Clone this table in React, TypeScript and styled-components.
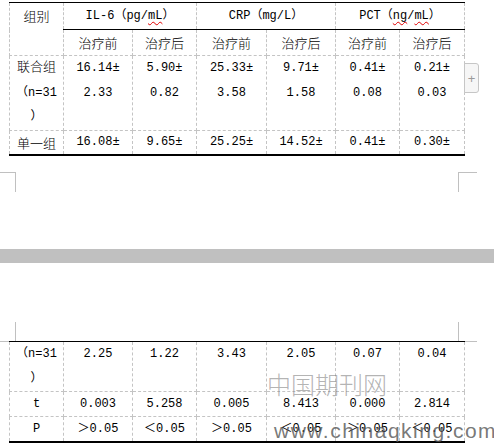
import React from "react";
import styled, { createGlobalStyle } from "styled-components";

const GlobalStyle = createGlobalStyle`
  html, body { margin: 0; padding: 0; background: #fff; }
  body {
    width: 494px;
    height: 446px;
    overflow: hidden;
    color: #000;
    font-family: "Liberation Mono", "Noto Sans CJK SC", monospace;
  }
`;

const LINE = "#c4c4c4";
const MARK = "#c0c0c0";

const Page = styled.div`
  position: relative;
  display: flex;
  flex-direction: column;
  align-items: flex-start;
  padding-top: 2px;
  width: 494px;
  height: 446px;
  box-sizing: border-box;
  overflow: hidden;
`;

const TableWrap = styled.div<{ $pull?: boolean }>`
  position: relative;
  margin-left: 9px;
  margin-top: ${(p) => (p.$pull ? "-1px" : "0")};
`;

const Grid = styled.table`
  border-collapse: collapse;
  table-layout: fixed;
  width: 455px;
  border-top: 1px solid #000;
  border-bottom: 2px solid #000;
  border-left: 1px dashed ${LINE};
  border-right: 1px dashed ${LINE};
`;

const Cell = styled.td<{ $cjk?: boolean; $top?: boolean; $rule?: boolean; $lh?: number }>`
  padding: 0;
  border: 1px dashed ${LINE};
  ${(p) => (p.$rule ? "border-bottom: 1px solid #000;" : "")}
  text-align: center;
  vertical-align: ${(p) => (p.$top ? "top" : "middle")};
  line-height: ${(p) => p.$lh ?? 24}px;
  white-space: nowrap;
  font-size: ${(p) => (p.$cjk ? "13px" : "12px")};
  font-weight: ${(p) => (p.$cjk ? 300 : 400)};
  font-family: ${(p) =>
    p.$cjk
      ? '"Noto Sans CJK SC", sans-serif'
      : '"Liberation Mono", "Noto Sans CJK SC", monospace'};
`;

const Cjk = styled.span`
  font-family: "Noto Sans CJK SC", sans-serif;
  font-size: 13px;
  font-weight: 300;
  line-height: 1;
`;

const Squiggle = styled.span`
  text-decoration: underline wavy #e00000;
  text-decoration-thickness: 1px;
  text-underline-offset: 2px;
`;

const PlusTab = styled.div`
  position: absolute;
  left: 455px;
  top: 61px;
  width: 13px;
  height: 28px;
  border: 1px solid #c6c6c6;
  border-radius: 0 3px 3px 0;
  background: #f6f6f6;
  color: #9a9a9a;
  display: flex;
  align-items: center;
  justify-content: center;
  font-family: "Liberation Sans", sans-serif;
  font-size: 13px;
`;

const MarkRow = styled.div<{ $gap: number }>`
  display: flex;
  justify-content: space-between;
  width: 477px;
  margin-top: ${(p) => p.$gap}px;
`;

const Mark = styled.div<{ $side: "left" | "right"; $edge: "top" | "bottom" }>`
  width: ${(p) => (p.$side === "left" ? 15 : 18)}px;
  height: 19px;
  border-${(p) => p.$edge}: 1px solid ${MARK};
  border-${(p) => (p.$side === "left" ? "right" : "left")}: 1px solid ${MARK};
`;

const Band = styled.div`
  align-self: stretch;
  height: 14px;
  margin-top: 57px;
  background: #c0c0c0;
`;

const WatermarkCn = styled.div`
  position: absolute;
  left: 267px;
  top: 372px;
  font-family: "Noto Sans CJK SC", sans-serif;
  font-weight: 300;
  font-size: 24px;
  line-height: 1;
  color: rgba(115, 115, 115, 0.55);
  white-space: nowrap;
`;

const WatermarkUrl = styled.div`
  position: absolute;
  left: 274px;
  top: 420px;
  font-family: "Liberation Sans", sans-serif;
  font-size: 21px;
  letter-spacing: 1.5px;
  line-height: 1;
  color: rgba(85, 85, 85, 0.8);
  white-space: nowrap;
`;

const COLS = [54, 69, 64, 70, 69, 64, 65];

const Cols = () => (
  <colgroup>
    {COLS.map((w, i) => (
      <col key={i} style={{ width: w }} />
    ))}
  </colgroup>
);

type Pair = [string, string];
const combined: Pair[] = [
  ["16.14±", "2.33"],
  ["5.90±", "0.82"],
  ["25.33±", "3.58"],
  ["9.71±", "1.58"],
  ["0.41±", "0.08"],
  ["0.21±", "0.03"],
];
const single = ["16.08±", "9.65±", "25.25±", "14.52±", "0.41±", "0.30±"];
const singleSd = ["2.25", "1.22", "3.43", "2.05", "0.07", "0.04"];
const tVals = ["0.003", "5.258", "0.005", "8.413", "0.000", "2.814"];
const pVals = ["＞0.05", "＜0.05", "＞0.05", "＜0.05", "＞0.05", "＜0.05"];
const phases = ["治疗前", "治疗后", "治疗前", "治疗后", "治疗前", "治疗后"];

const TRIPLE = 74 / 3;

export default function App() {
  return (
    <>
      <GlobalStyle />
      <Page>
        <TableWrap>
          <Grid>
            <Cols />
            <tbody>
              <tr>
                <Cell $cjk $top $lh={26} rowSpan={2}>
                  组别
                </Cell>
                <Cell colSpan={2} $rule $lh={26}>
                  IL-6（pg/<Squiggle>mL</Squiggle>）
                </Cell>
                <Cell colSpan={2} $rule $lh={26}>
                  CRP（mg/L）
                </Cell>
                <Cell colSpan={2} $rule $lh={26}>
                  PCT（<Squiggle>ng</Squiggle>/<Squiggle>mL</Squiggle>）
                </Cell>
              </tr>
              <tr>
                {phases.map((p, i) => (
                  <Cell key={i} $cjk $lh={25}>
                    {p}
                  </Cell>
                ))}
              </tr>
              <tr>
                <Cell $lh={TRIPLE}>
                  <Cjk>联合组</Cjk>
                  <br />
                  （n=31
                  <br />）
                </Cell>
                {combined.map(([a, b], i) => (
                  <Cell key={i} $top $lh={TRIPLE}>
                    {a}
                    <br />
                    {b}
                  </Cell>
                ))}
              </tr>
              <tr>
                <Cell $cjk $lh={23}>
                  单一组
                </Cell>
                {single.map((v, i) => (
                  <Cell key={i} $lh={23}>
                    {v}
                  </Cell>
                ))}
              </tr>
            </tbody>
          </Grid>
          <PlusTab>+</PlusTab>
        </TableWrap>

        <MarkRow $gap={16}>
          <Mark $side="left" $edge="top" />
          <Mark $side="right" $edge="top" />
        </MarkRow>

        <Band />

        <MarkRow $gap={59}>
          <Mark $side="left" $edge="bottom" />
          <Mark $side="right" $edge="bottom" />
        </MarkRow>

        <TableWrap $pull>
          <Grid>
            <Cols />
            <tbody>
              <tr>
                <Cell $lh={24.5}>
                  （n=31
                  <br />）
                </Cell>
                {singleSd.map((v, i) => (
                  <Cell key={i} $top $lh={24.5}>
                    {v}
                  </Cell>
                ))}
              </tr>
              <tr>
                <Cell>t</Cell>
                {tVals.map((v, i) => (
                  <Cell key={i}>{v}</Cell>
                ))}
              </tr>
              <tr>
                <Cell>P</Cell>
                {pVals.map((v, i) => (
                  <Cell key={i}>{v}</Cell>
                ))}
              </tr>
            </tbody>
          </Grid>
        </TableWrap>

        <WatermarkCn>中国期刊网</WatermarkCn>
        <WatermarkUrl>www.chinaqking.com</WatermarkUrl>
      </Page>
    </>
  );
}
